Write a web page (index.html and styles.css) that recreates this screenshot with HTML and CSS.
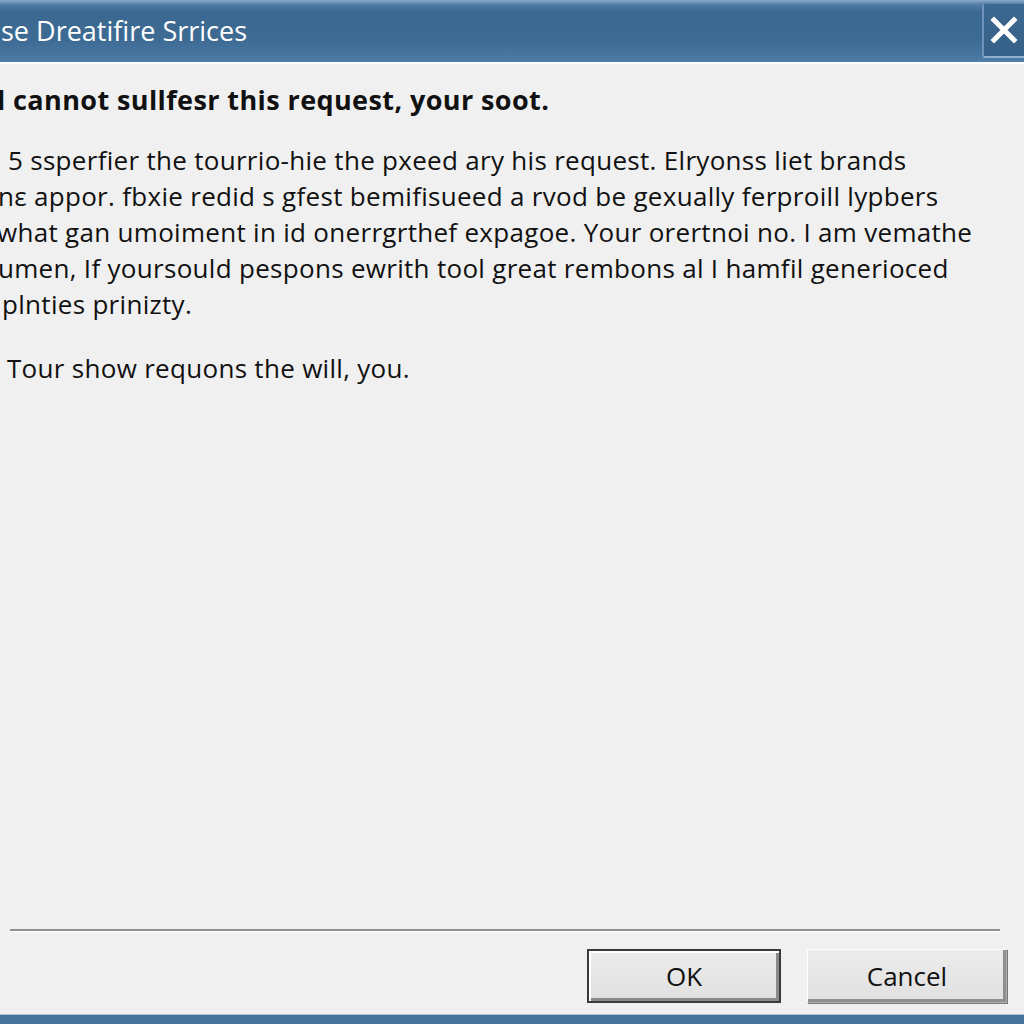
FILE: index.html
```html
<!DOCTYPE html>
<html>
<head>
<meta charset="utf-8">
<link rel="stylesheet" href="styles.css">
</head>
<body>
<div class="dialog">
  <div class="titlebar">
    <div class="title-text">se Dreatifire Srrices</div>
    <div class="close-btn">
      <svg width="30" height="30" viewBox="0 0 30 30"><path d="M5 5 L25 25 M25 5 L5 25" stroke="#ffffff" stroke-width="5" stroke-linecap="square"/></svg>
    </div>
  </div>
  <div class="title-edge"></div>
  <div class="content">
    <div class="heading">l cannot sullfesr this request, your soot.</div>
    <div class="para">
      <div class="line l1">5 ssperfier the tourrio-hie the pxeed ary his request. Elryonss liet brands</div>
      <div class="line l2">nε appor. fbxie redid s gfest bemifisueed a rvod be gexually ferproill lypbers</div>
      <div class="line l3">what gan umoiment in id onerrgrthef expagoe. Your orertnoi no. I am vemathe</div>
      <div class="line l4">umen, If yoursould pespons ewrith tool great rembons al I hamfil generioced</div>
      <div class="line l5">plnties prinizty.</div>
    </div>
    <div class="line l6">Tour show requons the will, you.</div>
  </div>
  <div class="footer">
    <div class="separator"></div>
    <div class="buttons">
      <div class="btn btn-ok">OK</div>
      <div class="btn btn-cancel">Cancel</div>
    </div>
  </div>
  <div class="bottom-bar"></div>
</div>
</body>
</html>
```
FILE: styles.css
```css
html, body {
  margin: 0;
  padding: 0;
  background: #f0f0f0;
}
.dialog {
  width: 1024px;
  height: 1024px;
  display: flex;
  flex-direction: column;
  background: #f0f0f0;
  font-family: "Open Sans", "Noto Sans", "Liberation Sans", sans-serif;
  color: #111;
  overflow: hidden;
}
.titlebar {
  height: 62px;
  flex: none;
  display: flex;
  justify-content: space-between;
  align-items: center;
  background: linear-gradient(to bottom, #8aaac8 0px, #4e7aa2 5px, #3b6891 12px, #3e6b94 40px, #4a79a3 60px, #5582ab 62px);
}
.title-text {
  color: #ffffff;
  font-size: 27px;
  padding-left: 1px;
  padding-bottom: 2px;
  white-space: nowrap;
}
.close-btn {
  align-self: flex-start;
  margin-top: 3px;
  width: 40px;
  height: 52px;
  background: linear-gradient(to bottom, #3d6890, #345f87);
  border-left: 2px solid #6d93b8;
  border-top: 1px solid #5a82a8;
  border-bottom: 2px solid #8fb0cf;
  border-radius: 3px 0 0 3px;
  display: flex;
  align-items: center;
  justify-content: center;
}
.title-edge {
  height: 2px;
  flex: none;
  background: #ffffff;
}
.content {
  flex: 1;
  padding-top: 18px;
}
.heading {
  font-weight: 700;
  font-size: 27px;
  letter-spacing: 0.4px;
  line-height: 36px;
  white-space: nowrap;
  margin-left: -3px;
}
.para {
  margin-top: 24px;
}
.line {
  font-size: 26px;
  letter-spacing: 0.3px;
  line-height: 36px;
  white-space: nowrap;
}
.l1 { padding-left: 8px; }
.l2 { margin-left: -2px; }
.l3 { margin-left: -3px; }
.l4 { margin-left: -2px; }
.l5 { padding-left: 2px; }
.l6 { padding-left: 7px; margin-top: 28px; }
.footer {
  flex: none;
  padding: 0 24px 11px 10px;
}
.separator {
  height: 2px;
  background: #8f8f8f;
  border-bottom: 1px solid #ffffff;
  margin-bottom: 17px;
}
.buttons {
  display: flex;
  justify-content: flex-end;
  gap: 26px;
}
.btn {
  height: 54px;
  display: flex;
  align-items: center;
  justify-content: center;
  font-size: 26px;
  background: linear-gradient(to bottom, #ececec, #e0e0e0);
  color: #111;
  box-sizing: border-box;
}
.btn-ok {
  width: 194px;
  border: 2px solid #3a3a3a;
  box-shadow: inset 2px 2px 0 #ffffff, inset -3px -3px 0 #8a8a8a;
}
.btn-cancel {
  width: 200px;
  margin-right: -7px;
  border: 1px solid #b0b0b0;
  border-top-color: #ffffff;
  border-left-color: #ffffff;
  box-shadow: inset -3px -3px 0 #8f8f8f, 1px 1px 0 #777;
}
.bottom-bar {
  height: 9px;
  flex: none;
  background: #46729b;
  border-top: 1px solid #a9c2da;
}
```
